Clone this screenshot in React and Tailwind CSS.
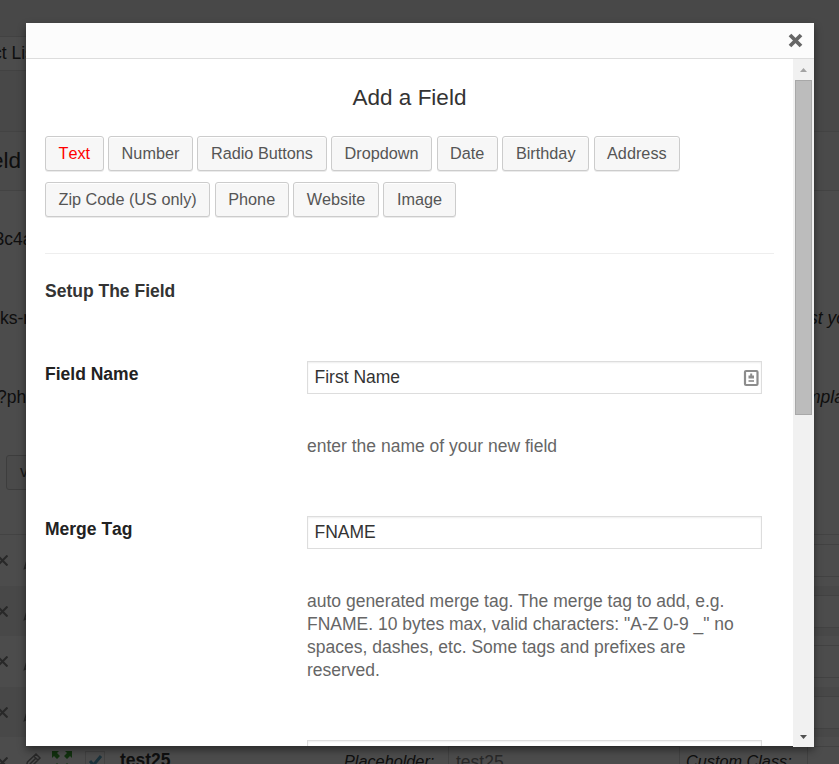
import React from "react";

const FIELD_TYPES = [
  ["Text", "Number", "Radio Buttons", "Dropdown", "Date", "Birthday", "Address"],
  ["Zip Code (US only)", "Phone", "Website", "Image"],
];

function TypeButton({ label, active }) {
  return (
    <button
      className={`h-[35px] whitespace-nowrap rounded-[3px] border border-[#ccc] bg-[#f7f7f7] px-[12.5px] text-[16.25px] leading-[33px] shadow-[inset_0_1px_0_#fff,0_1px_0_rgba(0,0,0,0.08)] ${
        active ? "text-[#ff0000]" : "text-[#555]"
      }`}
    >
      {label}
    </button>
  );
}

function CrossIcon() {
  return (
    <svg width="11" height="11" viewBox="0 0 11 11" className="block">
      <path d="M0.500 0.500L10.500 10.500M10.500 0.500L0.500 10.500" stroke="#888" strokeWidth="2.2" />
    </svg>
  );
}

function PencilIcon() {
  return (
    <svg width="18" height="18" viewBox="0 0 18 18" className="block">
      <path d="M1.500 16.500L3.500 10L12 2L16 6L8 14ZM10 4.500L14 8M5.500 12.500L12 6" fill="none" stroke="#888" strokeWidth="1.500" />
    </svg>
  );
}

function ExpandIcon() {
  return (
    <svg width="20" height="20" viewBox="0 0 20 20" className="block" fill="#3fa535">
      <path d="M0 0H7L5 2L8 5L5 8L2 5L0 7ZM20 0H13L15 2L12 5L15 8L18 5L20 7ZM0 20H7L5 18L8 15L5 12L2 15L0 13ZM20 20H13L15 18L12 15L15 12L18 15L20 13Z" />
    </svg>
  );
}

function ContactIcon() {
  return (
    <svg width="16" height="18" viewBox="0 0 16 18" className="block">
      <rect x="2" y="2" width="12.500" height="14" rx="1" fill="#fff" stroke="#8c8c8c" strokeWidth="2.200" />
      <path d="M7.200 4.500H9.200V6.500H11V9.500H5.500V6.500H7.200Z" fill="#8c8c8c" />
      <path d="M5.500 12H11" stroke="#a0a0a0" strokeWidth="2" />
    </svg>
  );
}

function ListRow({ shaded, height }) {
  return (
    <div className={`flex shrink-0 justify-between ${height} ${shaded ? "bg-[#f0f0f0]" : "bg-white"}`}>
      <div className="flex pt-[20px]">
        <div className="-ml-[3px]"><CrossIcon /></div>
        <div className="ml-[15px] -mt-[3px]"><PencilIcon /></div>
      </div>
      <div className="mt-[9px] h-[33px] w-[60px] border-y border-[#ddd] bg-white" />
    </div>
  );
}

function Backdrop() {
  return (
    <div className="flex h-[764px] flex-col overflow-hidden bg-[#f1f1f1] text-[17.5px] text-[#333]">
      <div className="mt-[36px] h-[35px] w-[300px] shrink-0 border border-l-0 border-[#ddd] bg-white leading-[32px]">
        <span className="-ml-[7px] whitespace-nowrap">ct List</span>
      </div>
      <div className="mt-[60px] flex h-[60px] shrink-0 items-center border-y border-[#e2e2e2] bg-[#f7f7f7] text-[22.5px]">
        <span className="-ml-[9px]">eld</span>
      </div>
      <div className="flex h-[343px] shrink-0 flex-col bg-white">
        <div className="mt-[37px] h-[23px] shrink-0 leading-[23px]">
          <span className="-ml-[5.5px]">3c4a8</span>
        </div>
        <div className="mt-[56px] flex h-[23px] shrink-0 justify-between leading-[23px]">
          <span>ks-m</span>
          <span className="w-[30px] whitespace-nowrap italic">st your</span>
        </div>
        <div className="mt-[56px] flex h-[23px] shrink-0 justify-between leading-[23px]">
          <span className="-ml-[3px]">?php</span>
          <span className="w-[33px] whitespace-nowrap italic">mplate</span>
        </div>
        <div className="ml-[6px] mt-[46px] h-[35px] w-[90px] shrink-0 rounded-[3px] border border-[#ccc] bg-[#f7f7f7] pl-[13px] text-[16.25px] leading-[31px] text-[#555]">
          view
        </div>
      </div>
      <div className="h-px shrink-0 bg-[#e2e2e2]" />
      <ListRow height="h-[51px]" />
      <ListRow height="h-[50px]" shaded />
      <ListRow height="h-[51px]" />
      <ListRow height="h-[50px]" shaded />
      <div className="flex h-[51px] shrink-0 bg-white pt-[9px]">
        <div className="-ml-[3px] mt-[11px] w-[27px] shrink-0"><CrossIcon /></div>
        <div className="mt-[6px] w-[28px] shrink-0"><PencilIcon /></div>
        <div className="mt-[5px] w-[33px] shrink-0"><ExpandIcon /></div>
        <div className="mt-[5px] h-[20px] w-[20px] shrink-0 border border-[#ddd] pl-[2px] pt-[2px]">
          <svg width="15" height="14" viewBox="0 0 15 14">
            <path d="M2 7L5.500 11L13 2" fill="none" stroke="#5aa5c4" strokeWidth="3" />
          </svg>
        </div>
        <div className="ml-[15px] mt-px w-[224px] shrink-0 font-bold">test25</div>
        <div className="mt-[3px] w-[104px] shrink-0 text-[16.25px] italic">Placeholder:</div>
        <div className="h-[33px] w-[232px] shrink-0 border border-[#ddd] pl-[7px] leading-[30px] text-[#888]">test25</div>
        <div className="mt-[3px] w-[127px] shrink-0 pl-[6px] text-[16.25px] italic">Custom Class:</div>
        <div className="h-[33px] w-[60px] shrink-0 border border-[#ddd]" />
      </div>
    </div>
  );
}

function Modal() {
  return (
    <section className="absolute left-[26px] top-[23px] flex h-[723px] w-[788px] flex-col bg-white shadow-[0_4px_8px_rgba(0,0,0,0.45)]">
      <header className="flex h-[36px] shrink-0 items-center justify-end border-b border-[#ddd] bg-[#fcfcfc] pr-[11px]">
        <svg width="15" height="15" viewBox="0 0 15 15">
          <path d="M2 2L13 13M13 2L2 13" stroke="#666" strokeWidth="3.800" />
        </svg>
      </header>
      <div className="flex h-[688px] shrink-0">
        <main className="h-[687px] w-[767px] shrink-0 overflow-hidden pl-[19px]">
          <h1 className="mr-[19px] mt-[24px] text-center text-[22.5px] leading-[30px] text-[#333]">Add a Field</h1>
          <div className="mt-[23px] flex flex-col gap-[11px]">
            {FIELD_TYPES.map((row, i) => (
              <div key={i} className="flex gap-[4.5px]">
                {row.map((label) => (
                  <TypeButton key={label} label={label} active={label === "Text"} />
                ))}
              </div>
            ))}
          </div>
          <hr className="mr-[19px] mt-[36px] border-[#eee]" />
          <h2 className="mt-[25px] text-[17.5px] font-bold leading-[24px] text-[#333]">Setup The Field</h2>
          <div className="mt-[58px] grid h-[155px] grid-cols-[262px_455px]">
            <label className="text-[17.5px] font-bold leading-[26px] text-[#222]">Field Name</label>
            <div>
              <div className="flex h-[33px] items-center justify-between border border-[#ddd] pl-[6.5px] pr-[2px] text-[17.5px] text-[#333] shadow-[inset_0_1px_2px_rgba(0,0,0,0.07)]">
                First Name
                <ContactIcon />
              </div>
              <p className="mt-[41px] text-[17.5px] leading-[23px] text-[#666]">enter the name of your new field</p>
            </div>
          </div>
          <div className="grid h-[224px] grid-cols-[262px_455px]">
            <label className="text-[17.5px] font-bold leading-[26px] text-[#222]">Merge Tag</label>
            <div>
              <div className="flex h-[33px] items-center border border-[#ddd] pl-[6.5px] text-[17.5px] text-[#333] shadow-[inset_0_1px_2px_rgba(0,0,0,0.07)]">
                FNAME
              </div>
              <p className="mt-[41px] text-[17.5px] leading-[23px] text-[#666]">
                auto generated merge tag. The merge tag to add, e.g. FNAME. 10 bytes max, valid characters: "A-Z 0-9 _" no
                spaces, dashes, etc. Some tags and prefixes are reserved.
              </p>
            </div>
          </div>
          <div className="ml-[262px] h-[33px] w-[455px] border border-[#ddd] shadow-[inset_0_1px_2px_rgba(0,0,0,0.07)]" />
        </main>
        <div className="flex h-[688px] w-[21px] shrink-0 flex-col items-center bg-[#f1f1f1]">
          <div className="flex h-[21px] shrink-0 items-center">
            <svg width="7" height="4" viewBox="0 0 7 4"><path d="M0 4L3.500 0L7 4Z" fill="#a3a3a3" /></svg>
          </div>
          <div className="h-[335px] w-[17px] shrink-0 border border-[#a8a8a8] bg-[#bcbcbc]" />
          <div className="grow" />
          <div className="flex h-[21px] shrink-0 items-center">
            <svg width="7" height="4" viewBox="0 0 7 4"><path d="M0 0H7L3.500 4Z" fill="#505050" /></svg>
          </div>
        </div>
      </div>
    </section>
  );
}

export default function App() {
  return (
    <div className="relative h-[764px] w-[839px] overflow-hidden font-['Liberation_Sans',Arial,sans-serif] [font-kerning:none]">
      <Backdrop />
      <div className="absolute inset-0 bg-black/70" />
      <Modal />
    </div>
  );
}
